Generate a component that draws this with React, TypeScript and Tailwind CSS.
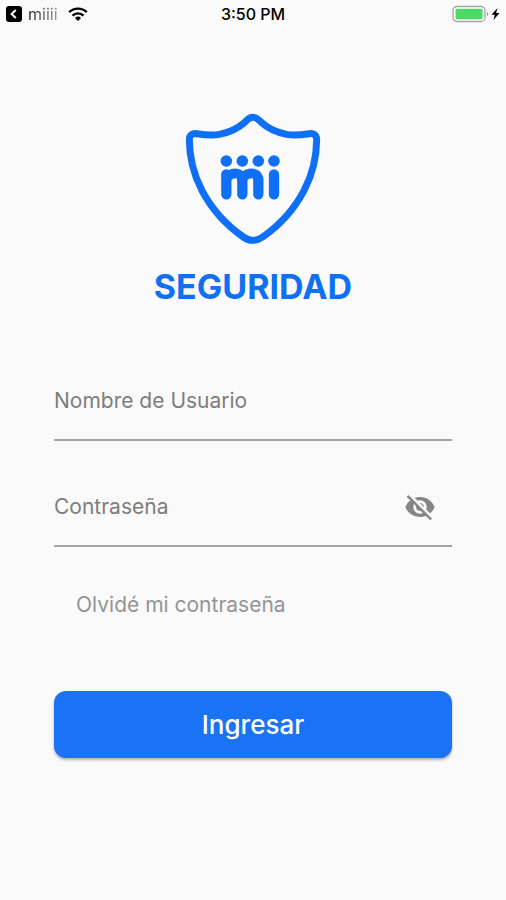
import { useState } from 'react'
import { MdVisibility, MdVisibilityOff } from 'react-icons/md'
import clsx from 'clsx'

function StatusBar() {
  return (
    <header className="grid grid-cols-3 items-center px-1 h-7 text-black">
      <div className="flex items-center gap-1">
        <svg className="w-5 h-5" viewBox="0 0 20 20" fill="none" aria-hidden="true">
          <rect x="2" y="2" width="16" height="16" rx="3" fill="currentColor" />
          <path d="M11.8 6 7.6 10l4.2 4" stroke="#fff" strokeWidth="2" />
        </svg>
        <span className="text-base leading-5 bg-linear-to-r from-[#222] to-[#999] bg-clip-text text-transparent">
          miiii
        </span>
        <svg className="w-5 h-4 ml-1.5" viewBox="0 0 20 16" fill="none" stroke="currentColor" strokeWidth="2.4" aria-hidden="true">
          <path d="M1.2 6.2a12.6 12.6 0 0 1 17.6 0" />
          <path d="M4.5 9.6a7.8 7.8 0 0 1 11 0" />
          <path d="M10 15 7 11.9a4.3 4.3 0 0 1 6 0Z" fill="currentColor" stroke="none" />
        </svg>
      </div>
      <time className="text-center text-base leading-5 font-medium whitespace-nowrap">3:50 PM</time>
      <div className="flex items-center justify-end pr-0.5">
        <svg className="w-12 h-5" viewBox="0 0 48 20" aria-hidden="true">
          <rect x="1" y="2.5" width="32" height="15" rx="4" fill="#fff" stroke="#a5a5a5" strokeWidth="1.3" />
          <rect x="3.5" y="4.8" width="27" height="10.4" rx="1.5" fill="#4cd964" />
          <path d="M34.8 7.5c2 .8 2 4.2 0 5Z" fill="#a5a5a5" />
          <path d="M45.5 4 39.5 10.8h3.2L41.5 16l6-7h-3.4Z" fill="currentColor" />
        </svg>
      </div>
    </header>
  )
}

function ShieldLogo() {
  return (
    <svg className="w-[136px] h-[132px]" viewBox="47 39 408 396" fill="none" stroke="#0f70f5" strokeLinecap="round" role="img" aria-label="mi">
      <path
        strokeWidth="21"
        d="M251 52C240 52 233 60 226 67C206 85 180 97 150 103C125 107 103 104 82 101C69 99 60 106 60 119C60 170 74 225 98 272C125 323 170 375 222 411C240 424 262 424 280 411C332 375 377 323 404 272C428 225 442 170 442 119C442 106 433 99 420 101C399 104 377 107 352 103C322 97 296 85 276 67C269 60 262 52 251 52Z"
      />
      <g fill="#0f70f5" stroke="none">
        <circle cx="171" cy="183" r="17.5" />
        <circle cx="219" cy="183" r="17.5" />
        <circle cx="267" cy="183" r="17.5" />
        <circle cx="314" cy="183" r="17.5" />
      </g>
      <g strokeWidth="31">
        <path d="M171 223V283M219 236V283M267 236V283M314 223V283" />
        <path strokeWidth="29" d="M176 229C192 216 218 216 218 239M224 229C240 216 267 216 267 239" />
      </g>
    </svg>
  )
}

const inputClass =
  'w-full h-20 bg-transparent border-b-2 border-[#a3a3a3] outline-none text-[21px] text-neutral-800 placeholder:text-[#7d7d7d] placeholder:opacity-100 focus:border-[#1a73f5]'

export default function App() {
  const [username, setUsername] = useState('')
  const [password, setPassword] = useState('')
  const [showPassword, setShowPassword] = useState(false)

  return (
    <div className="min-h-screen bg-[#fafafa] font-['Inter',sans-serif]">
      <StatusBar />

      <main className="px-[54px] pt-[85px]">
        {/* Brand */}
        <div className="flex flex-col items-center gap-5">
          <ShieldLogo />
          <h1 className="text-[34px] leading-11 font-bold text-[#0f70f5]">SEGURIDAD</h1>
        </div>

        {/* Login form */}
        <form className="flex flex-col mt-13" onSubmit={(e) => e.preventDefault()}>
          <input
            type="text"
            aria-label="Nombre de Usuario"
            placeholder="Nombre de Usuario"
            value={username}
            onChange={(e) => setUsername(e.target.value)}
            className={inputClass}
          />

          <div className="relative mt-[26px]">
            <input
              type={showPassword ? 'text' : 'password'}
              aria-label="Contraseña"
              placeholder="Contraseña"
              value={password}
              onChange={(e) => setPassword(e.target.value)}
              className={clsx(inputClass, 'pr-16')}
            />
            <button
              type="button"
              aria-label="Mostrar contraseña"
              onClick={() => setShowPassword(!showPassword)}
              className="absolute inset-y-0 right-4 flex items-center text-[#858585]"
            >
              {showPassword ? <MdVisibility className="w-8 h-8" /> : <MdVisibilityOff className="w-8 h-8" />}
            </button>
          </div>

          <a href="#" className="self-start mt-11 ml-[22px] text-[21px] leading-7 text-[#949494]">
            Olvidé mi contraseña
          </a>

          <button
            type="submit"
            className="mt-18 h-[67px] rounded-xl bg-[#1a73f5] text-white text-[26px] font-medium shadow-[0_2px_3px_rgba(0,0,0,0.3)]"
          >
            Ingresar
          </button>
        </form>
      </main>
    </div>
  )
}
